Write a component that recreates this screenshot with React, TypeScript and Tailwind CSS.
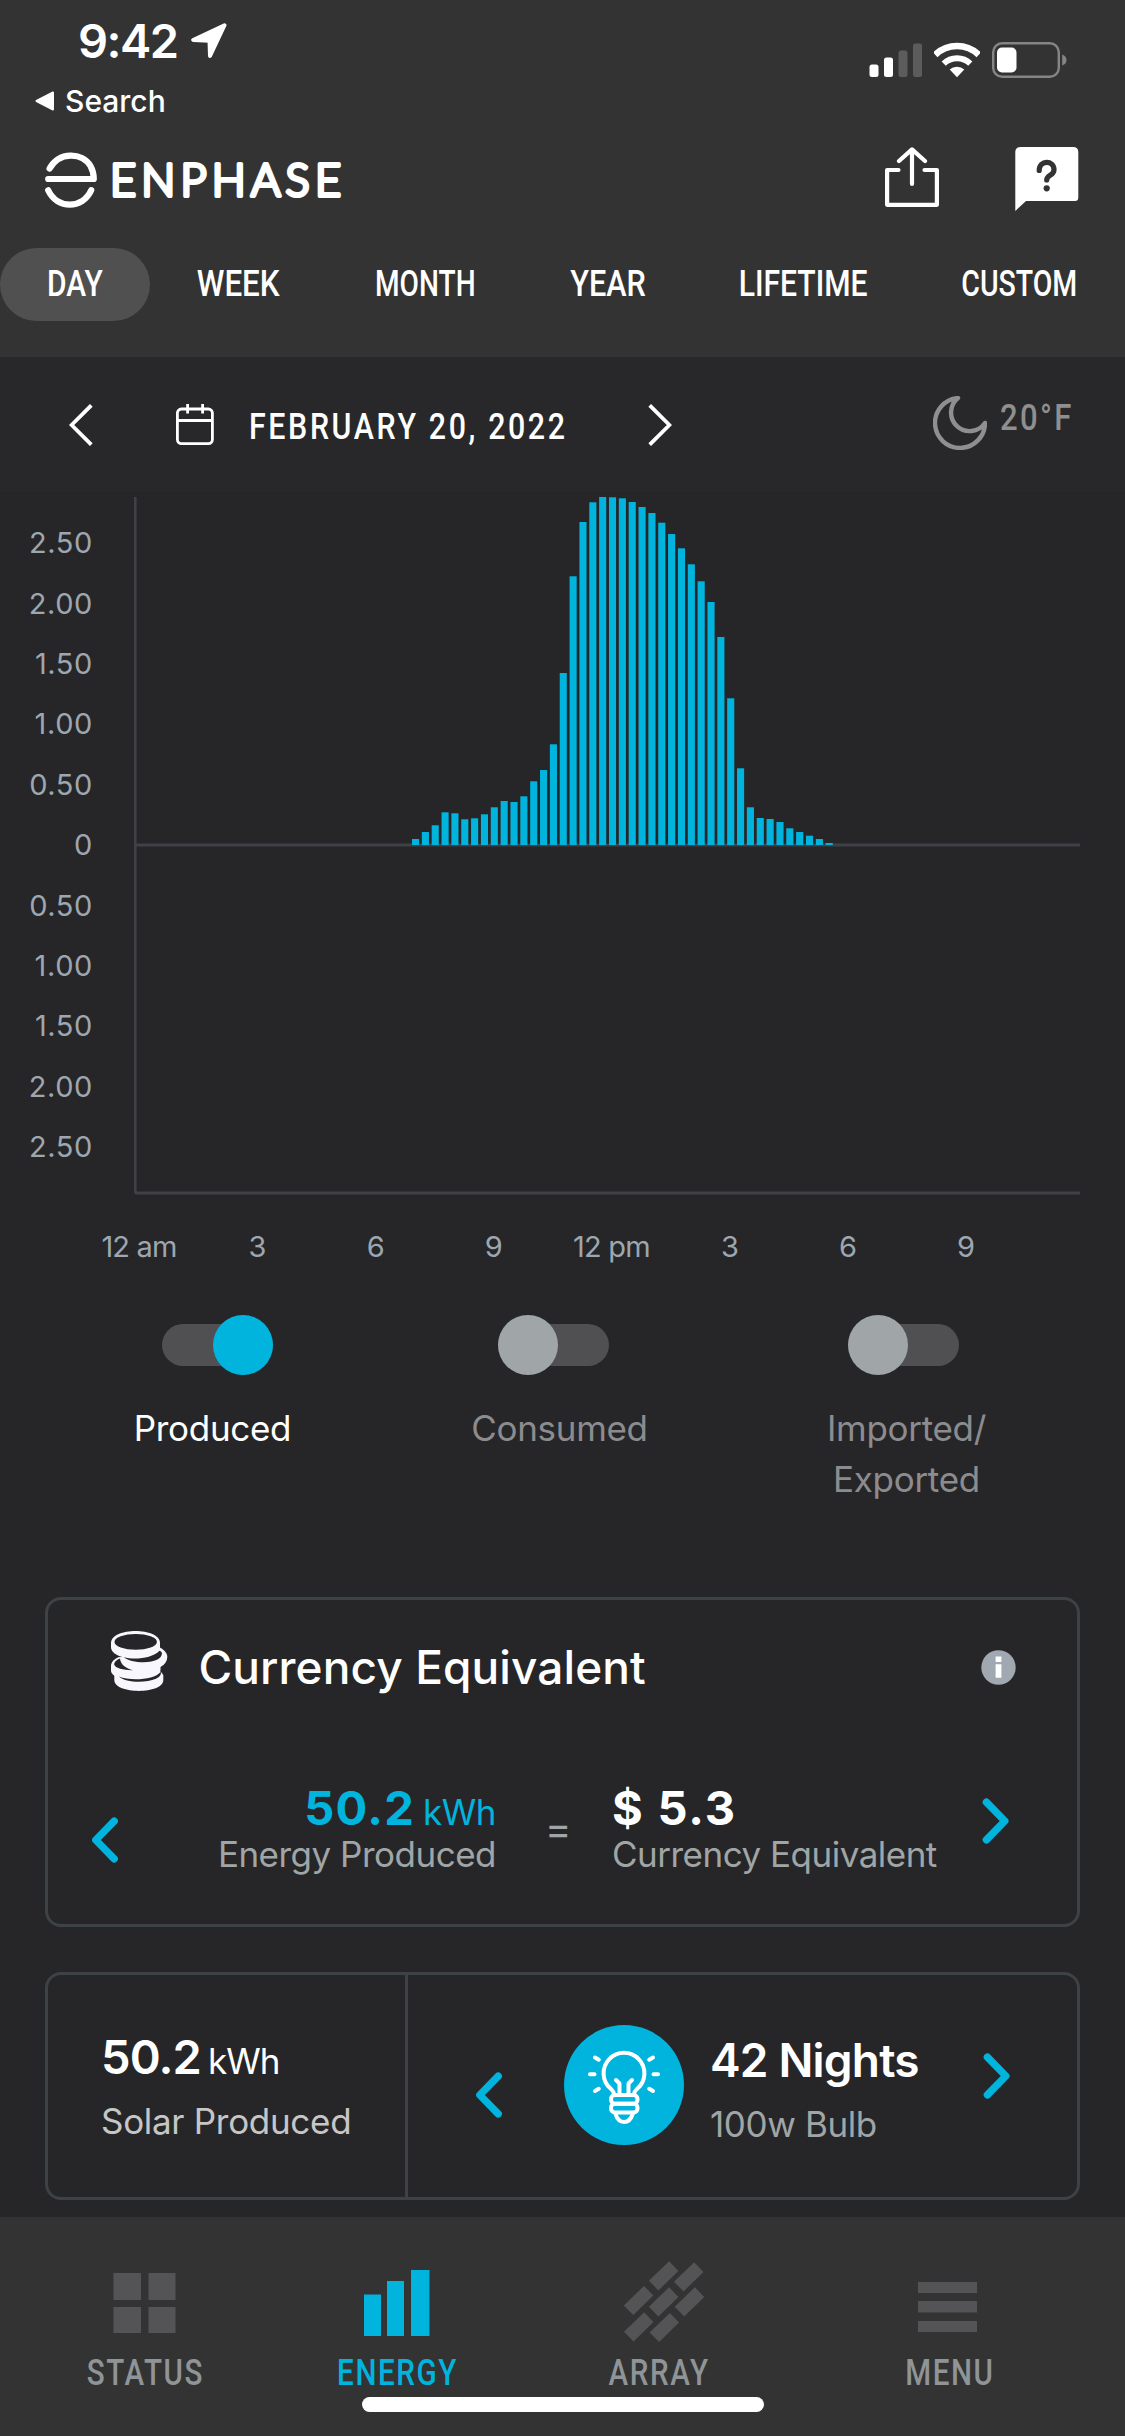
import clsx from 'clsx'
import React from 'react'

const tabs = [
  { label: 'DAY', width: 'w-[150px]', fit: 'scale-x-[0.82]', active: true },
  { label: 'WEEK', width: 'w-[177px]', fit: 'scale-x-[0.86]' },
  { label: 'MONTH', width: 'w-[197px]', fit: 'scale-x-[0.77]' },
  { label: 'YEAR', width: 'w-[168px]', fit: 'scale-x-[0.84]' },
  { label: 'LIFETIME', width: 'w-[223px]', fit: 'scale-x-[0.825]' },
  { label: 'CUSTOM', width: 'w-[208px]', fit: 'scale-x-[0.78]' },
]

const yLabels = ['2.50', '2.00', '1.50', '1.00', '0.50', '0', '0.50', '1.00', '1.50', '2.00', '2.50']
const xLabels = ['12 am', '3', '6', '9', '12 pm', '3', '6', '9']

// Quarter-hour production, bar heights in pixels
const FIRST_SLOT = 28
const SLOT_WIDTH = 9.85
const production = [
  6, 13, 19.7, 32.7, 31.7, 25.7, 26.7, 30.7, 37.7, 44, 43, 48.7, 63.7, 75, 100.7, 172, 268.7,
  323, 342.7, 348, 347.7, 346.7, 343, 338, 332, 322.3, 311, 296.7, 280.7, 263.7, 243, 208,
  146.7, 76.7, 37.7, 27, 26, 23, 16.7, 13, 9.3, 6, 2,
]

function StatusBar() {
  return (
    <div className="flex h-[128px] items-start justify-between">
      <div className="pt-[17px]">
        <div className="flex items-center pl-[78px]">
          <span className="w-[113px] text-[47px] leading-none font-semibold tracking-[-1.5px]">9:42</span>
          <svg className="h-9 w-9" viewBox="0 0 36 36" fill="#fff" stroke="#fff" strokeWidth="4" strokeLinejoin="round">
            <path d="M33.5 2.2 L2.2 17 L18.5 17.8 L19 33 Z" />
          </svg>
        </div>
        <div className="mt-[22px] flex items-center pl-[35px]">
          <svg className="h-5 w-5" viewBox="0 0 20 20" fill="#fff" stroke="#fff" strokeWidth="2" strokeLinejoin="round">
            <path d="M1.5 10 L18 1.5 V18.5 Z" />
          </svg>
          <span className="ml-[10px] text-[30px] leading-none font-medium">Search</span>
        </div>
      </div>
      <div className="flex items-start pt-[42px] pr-[58px]">
        <svg className="mt-px h-[35px] w-[54px]" viewBox="0 0 54 35" fill="#fff">
          <rect x="0.5" y="21.5" width="9" height="12.5" rx="2.5" />
          <rect x="15" y="14.5" width="9" height="19.5" rx="2.5" />
          <rect x="29.5" y="7.5" width="9" height="26.5" rx="2.5" fill="#5c5c5c" />
          <rect x="44" y="0.5" width="9" height="33.5" rx="2.5" fill="#5c5c5c" />
        </svg>
        <svg className="ml-[11px] h-9 w-[46px]" viewBox="0 0 46 36" fill="none" stroke="#fff">
          <path d="M1.2 12.8 A31.4 31.4 0 0 1 44.8 12.8" strokeWidth="6.5" />
          <path d="M9.7 21.6 A19.1 19.1 0 0 1 36.3 21.6" strokeWidth="6" />
          <path d="M23 35.2 L15.7 27.6 A10.6 10.6 0 0 1 30.3 27.6 Z" fill="#fff" stroke="none" />
        </svg>
        <svg className="ml-3 h-9 w-[75px]" viewBox="0 0 75 36">
          <rect x="1.2" y="1.2" width="65.6" height="33.6" rx="9" fill="none" stroke="#858585" strokeWidth="2.4" />
          <rect x="5" y="5.5" width="19.5" height="25" rx="5" fill="#fff" />
          <path d="M70.2 12.5 Q74.5 14 74.5 18 T70.2 23.5 Z" fill="#858585" />
        </svg>
      </div>
    </div>
  )
}

function BrandRow() {
  return (
    <div className="flex h-[120px] items-start pl-[45px]">
      <svg className="mt-[15px] h-[76px] w-[310px]" viewBox="0 -10 310 76">
        <g fill="none" stroke="#fff" strokeWidth="6.2" strokeLinecap="round" strokeLinejoin="round">
          <path d="M4.6 15.6 C14 -1.5 37 -1 45.5 13 C48 17.5 48.8 21 48.8 26 H3.2" />
          <path d="M3.2 37.2 C12 56.5 37.5 56.5 46.2 37.2" />
        </g>
        <text
          x="65"
          y="42.8"
          fontFamily="Lato, sans-serif"
          fontSize="45"
          fontWeight="300"
          textLength="231"
          fill="#fff"
          stroke="#fff"
          strokeWidth="4"
          strokeLinejoin="round"
        >
          ENPHASE
        </text>
      </svg>
      <svg
        className="mt-[19px] ml-[530px] h-[60px] w-[54px]"
        viewBox="0 0 54 60"
        fill="none"
        stroke="#fff"
        strokeWidth="4.2"
        strokeLinecap="round"
        strokeLinejoin="round"
      >
        <path d="M13.5 23 H2.1 V57.8 H51.9 V23 H39.5" />
        <path d="M27 37 V3 M14 14 L27 2.4 L40 14" />
      </svg>
      <svg className="mt-[19px] ml-[76px] h-[64px] w-[64px]" viewBox="0 0 64 64">
        <path d="M0.3 64 V5 Q0.3 0 5.5 0 H58 Q63.3 0 63.3 5 V50.5 Q63.3 54 60 54 H11 Z" fill="#fff" />
        <path
          d="M24.2 23.5 C24.2 12.7 39 12.7 39 22.7 C39 29 31.7 27.5 31.7 33"
          fill="none"
          stroke="#333"
          strokeWidth="5.2"
          strokeLinecap="round"
        />
        <circle cx="31.7" cy="41.3" r="3.1" fill="#333" />
      </svg>
    </div>
  )
}

function Tabs() {
  return (
    <div className="flex h-[73px] font-[Roboto,sans-serif]">
      {tabs.map(tab => (
        <div
          key={tab.label}
          className={clsx(
            'flex shrink-0 items-center justify-center rounded-full',
            tab.width,
            tab.active && 'bg-[#505050]',
          )}
        >
          <span className={clsx('text-[36.5px] leading-none font-medium', tab.fit)}>{tab.label}</span>
        </div>
      ))}
    </div>
  )
}

function DateRow() {
  return (
    <div className="flex h-[135px] items-center bg-[#28282a] pl-[69px] font-[Roboto,sans-serif]">
      <svg className="h-[42px] w-6" viewBox="0 0 24 42" fill="none" stroke="#fff" strokeWidth="3.8">
        <path d="M22.3 1.3 L2.6 21 L22.3 40.7" />
      </svg>
      <svg className="ml-[83px] h-[41px] w-[38px]" viewBox="0 0 38 41" fill="none" stroke="#fff" strokeWidth="2.8">
        <rect x="1.4" y="5" width="35" height="34.6" rx="4" />
        <path d="M1.4 16.5 H36.4 M11.6 0 V9.5 M26.6 0 V9.5" />
      </svg>
      <span className="mt-[3px] ml-[35px] w-[399px] origin-left scale-x-[0.82] text-[37px] leading-none font-medium tracking-[3.2px] whitespace-nowrap">
        FEBRUARY 20, 2022
      </span>
      <svg className="h-[42px] w-6" viewBox="0 0 24 42" fill="none" stroke="#fff" strokeWidth="3.8">
        <path d="M1.7 1.3 L21.4 21 L1.7 40.7" />
      </svg>
      <svg
        className="-mt-[3px] ml-[261px] h-[54px] w-[54px]"
        viewBox="0 0 54 54"
        fill="none"
        stroke="#8f8f8f"
        strokeWidth="4.4"
        strokeLinejoin="round"
      >
        <path d="M25 2 A25 25 0 1 0 52 27 A18.6 18.6 0 1 1 25 2 Z" />
      </svg>
      <span className="-mt-[14px] ml-[13px] origin-left scale-x-[0.84] text-[37px] leading-none font-medium tracking-[2.8px] text-[#8f8f8f]">
        20°F
      </span>
    </div>
  )
}

function EnergyChart() {
  return (
    <div className="h-[806px] text-[29px] text-[#9ea6b0]">
      <div className="flex h-[703px]">
        <div className="flex w-[134px] flex-col pt-[20.5px]">
          {yLabels.map((label, i) => (
            <div
              key={i}
              className="flex h-[60.4px] shrink-0 items-center justify-end pr-[41px] leading-none tracking-[0.6px]"
            >
              {label}
            </div>
          ))}
        </div>
        <svg className="mt-[5px] h-[698px] w-[946px]" viewBox="0 0 946 698">
          <path d="M1.3 0 V696" stroke="#404146" strokeWidth="2.6" />
          <path d="M1 348 H946 M1 696 H946" stroke="#404146" strokeWidth="3" />
          {production.map((height, i) => (
            <rect
              key={i}
              x={2.4 + FIRST_SLOT * 9.842 + i * SLOT_WIDTH}
              y={348 - height}
              width={7.1}
              height={height}
              fill="#00b4de"
            />
          ))}
        </svg>
      </div>
      <div className="flex h-[103px] items-center pl-[80px]">
        {xLabels.map((label, i) => (
          <div key={i} className="w-[118.1px] text-center leading-none tracking-[-0.8px]">{label}</div>
        ))}
      </div>
    </div>
  )
}

function Toggle({
  label,
  on = false,
  offset,
}: {
  label: React.ReactNode
  on?: boolean
  offset: string
}) {
  return (
    <div className="flex w-[347px] flex-col items-center">
      <div className={clsx('flex h-[60px] w-[111px] items-center', offset)}>
        <div className="flex h-[42px] w-full items-center rounded-full bg-[#505052]">
          <div className={clsx('size-[60px] shrink-0 rounded-full', on ? 'ml-auto bg-[#00b4de]' : 'bg-[#a0a6a8]')} />
        </div>
      </div>
      <div
        className={clsx(
          'mt-7 text-center text-[35px] leading-[51px] tracking-[-0.3px]',
          on ? 'text-white' : 'text-[#8c8c8f]',
        )}
      >
        {label}
      </div>
    </div>
  )
}

function Chevron({ direction, className }: { direction: 'left' | 'right', className?: string }) {
  return (
    <svg
      className={clsx('h-[46px] w-7 shrink-0', className)}
      viewBox="0 0 28 46"
      fill="none"
      stroke="#00b4de"
      strokeWidth="7.4"
      strokeLinecap="round"
      strokeLinejoin="round"
    >
      <path d={direction === 'left' ? 'M23.2 4.2 L4.8 23 L23.2 41.8' : 'M4.4 4.2 L22.8 23 L4.4 41.8'} />
    </svg>
  )
}

function CoinsIcon() {
  return (
    <svg className="h-[60px] w-[57px] shrink-0" viewBox="0 0 57 60">
      <g fill="#f8f7fd">
        <path d="M3.3 44 V49 C3.3 63.5 52.3 63.5 52.3 49 V44 C44 30 12 30 3.3 44 Z" />
        <path d="M8 26 C3 28 0 31 0 35 V40 C1 52 48 53 49.5 39 V30 Z" />
        <path d="M48 16 C53 18.5 56.3 22 56.3 26 C56 44 15 42 8 27 Z" />
        <path d="M0 12 C0 -4 49 -4 49 12 V16 C49 31.5 0 31.5 0 16 Z" />
      </g>
      <g fill="#262628">
        <ellipse cx="24.7" cy="10.9" rx="21.2" ry="7.9" />
        <path d="M12.6 26.3 C24 29 41 27.5 48.5 19.8 C52 20.5 52 25 47 28.3 C38 33.5 19 31.5 12.6 26.3 Z" />
        <path d="M9 27.5 C9.5 33.5 15 37.5 22 39.3 C13 39.5 4 37.3 3.2 33.6 C3 31 6 28.5 9 27.5 Z" />
        <path d="M8 45.5 C18 50 43 49.5 49.8 40.8 C50.5 43.5 49 46 45 47.8 C34 52.5 14 51.5 8 45.5 Z" />
      </g>
    </svg>
  )
}

function CurrencyCard() {
  return (
    <div className="mx-[45px] h-[330px] rounded-2xl border-[3px] border-[#3d4244]">
      <div className="flex h-[134px] items-center pr-[61px] pl-[63px]">
        <div className="-mt-3">
          <CoinsIcon />
        </div>
        <h2 className="ml-[30.5px] flex-1 text-[46px] leading-none font-medium tracking-[0.1px]">Currency Equivalent</h2>
        <svg className="size-[35px]" viewBox="0 0 35 35">
          <circle cx="17.5" cy="17.5" r="17.2" fill="#a0a8b2" />
          <path d="M14.6 6.5 H20.4 V12 H14.6 Z M14.6 14.3 H20.4 V27.8 H14.6 Z" fill="#fff" />
        </svg>
      </div>
      <div className="flex items-start">
        <Chevron direction="left" className="mt-[82.5px] ml-[43px]" />
        <div className="mt-[50px] w-[377px] text-right">
          <div className="flex items-baseline justify-end text-[#00b4de]">
            <span className="text-[47px] leading-none font-bold tracking-[1.3px]">50.2</span>
            <span className="ml-[8px] text-[35px] leading-none tracking-[-0.5px]">kWh</span>
          </div>
          <div className="mt-[6px] text-[35px] leading-none tracking-[-0.5px] text-[#a0a5a6]">Energy Produced</div>
        </div>
        <span className="mt-[75px] ml-[49px] w-[67px] text-[40px] leading-none text-[#a0a5a6]">=</span>
        <div className="mt-[50px] w-[370px]">
          <div className="text-[47px] leading-none font-bold tracking-[1.8px]">$ 5.3</div>
          <div className="mt-[6px] text-[35px] leading-none tracking-[-0.5px] text-[#a0a5a6]">Currency Equivalent</div>
        </div>
        <Chevron direction="right" className="mt-[64px]" />
      </div>
    </div>
  )
}

function BulbIcon() {
  return (
    <svg
      className="size-[120px] shrink-0"
      viewBox="0 0 120 120"
      fill="none"
      stroke="#fff"
      strokeWidth="4"
      strokeLinecap="round"
      strokeLinejoin="round"
    >
      <circle cx="60" cy="60" r="60" fill="#00b4de" stroke="none" />
      <path d="M50 69 C49.5 66 48 65 46.5 63.5 A20.4 20.4 0 1 1 73.5 63.5 C72 65 70.5 66 70 69" />
      <path d="M52 55 L55.5 58.5 V69 M68 55 L64.5 58.5 V69" />
      <rect x="47" y="70" width="26.5" height="8.8" rx="4" />
      <rect x="47" y="78.8" width="26.5" height="8.8" rx="4" />
      <path d="M51.5 89 C53 94 56 97 60.2 97 C64.5 97 67 94 68.7 89" />
      <path d="M31 32.5 L34.8 34.7 M89 32.5 L85.2 34.7 M26 49.3 H30.5 M94 49.3 H89.5 M31 66 L34.8 63.8 M89 66 L85.2 63.8" />
    </svg>
  )
}

function EquivalenceCard() {
  return (
    <div className="mx-[45px] mt-[45px] flex h-[228px] items-stretch rounded-2xl border-[3px] border-[#3d4244]">
      <div className="w-[360px] border-r-[3px] border-[#404146] pt-[58px] pl-[53px]">
        <div className="flex items-baseline">
          <span className="text-[47px] leading-none font-semibold tracking-[-0.9px]">50.2</span>
          <span className="ml-[7px] text-[35px] leading-none tracking-[-0.9px]">kWh</span>
        </div>
        <div className="mt-6 text-[35px] leading-none tracking-[-0.3px] whitespace-nowrap text-[#c6c6c6]">
          Solar Produced
        </div>
      </div>
      <div className="flex flex-1 items-start">
        <Chevron direction="left" className="mt-[97px] ml-[67px]" />
        <div className="mt-[50px] ml-[61px]">
          <BulbIcon />
        </div>
        <div className="mt-[62px] ml-[26px] w-[273px]">
          <div className="text-[46px] leading-none font-semibold tracking-[-0.8px]">42 Nights</div>
          <div className="mt-6 text-[35px] leading-none tracking-[-0.4px] text-[#a0a5a6]">100w Bulb</div>
        </div>
        <Chevron direction="right" className="mt-[78px]" />
      </div>
    </div>
  )
}

const navItems = [
  {
    label: 'STATUS',
    width: 'w-[252px]',
    icon: <path d="M17.5 15 H45 V42 H17.5 Z M52.5 15 H79.5 V42 H52.5 Z M17.5 49 H45 V75 H17.5 Z M52.5 49 H79.5 V75 H52.5 Z" />,
  },
  {
    label: 'ENERGY',
    width: 'w-[252px]',
    active: true,
    icon: <path d="M16 36.5 H33 V78 H16 Z M39 23 H56 V78 H39 Z M63 12 H81.5 V78 H63 Z" />,
  },
  {
    label: 'ARRAY',
    width: 'w-[271px]',
    icon: (
      <path d="M59.1 3.3 l9.3 9.6 l-20 19.5 l-9.5 -9.7 z M84.2 4.3 l9.3 9.6 l-20 19.5 l-9.5 -9.7 z M34 28 l9.3 9.6 l-20 19.5 l-9.5 -9.7 z M59.1 29.3 l9.3 9.6 l-20 19.5 l-9.5 -9.7 z M84.9 29.3 l9.3 9.6 l-20 19.5 l-9.5 -9.7 z M34.2 54.3 l9.3 9.6 l-20 19.5 l-9.5 -9.7 z M59.8 55 l9.3 9.6 l-20 19.5 l-9.5 -9.7 z" />
    ),
  },
  {
    label: 'MENU',
    width: 'w-[310px]',
    icon: <path d="M18 24 H77 V35 H18 Z M18 43 H77 V54.5 H18 Z M18 63 H77 V74 H18 Z" />,
  },
]

function BottomNav() {
  return (
    <div className="relative mt-[17px] flex h-[219px] items-start bg-[#333] pt-[41px] pl-[18px] font-[Roboto,sans-serif]">
      {navItems.map(item => (
        <div key={item.label} className={clsx('flex flex-col items-center', item.width)}>
          <svg className={clsx('h-[85px] w-24', item.active ? 'fill-[#00b4de]' : 'fill-[#545456]')} viewBox="0 0 96 85">
            {item.icon}
          </svg>
          <span
            className={clsx(
              'mt-[11px] -mr-[3px] scale-x-[0.8] text-[37px] leading-none font-medium tracking-[2px]',
              item.active ? 'text-[#00b4de]' : 'text-[#8f9496]',
            )}
          >
            {item.label}
          </span>
        </div>
      ))}
      <div className="absolute bottom-6 left-[362px] h-[15px] w-[402px] rounded-full bg-white" />
    </div>
  )
}

export default function App() {
  return (
    <div className="h-[2436px] w-[1125px] overflow-hidden bg-[#262628] font-[Inter,sans-serif] text-white">
      <header className="h-[357px] bg-[#333]">
        <StatusBar />
        <BrandRow />
        <Tabs />
      </header>
      <DateRow />
      <EnergyChart />
      <div className="flex h-[299px] items-start pt-[17px] pl-[39px]">
        <Toggle label="Produced" on offset="ml-[10px]" />
        <Toggle label="Consumed" offset="mr-[13px]" />
        <Toggle label={<>Imported/<br />Exported</>} offset="mr-[7px]" />
      </div>
      <CurrencyCard />
      <EquivalenceCard />
      <BottomNav />
    </div>
  )
}
